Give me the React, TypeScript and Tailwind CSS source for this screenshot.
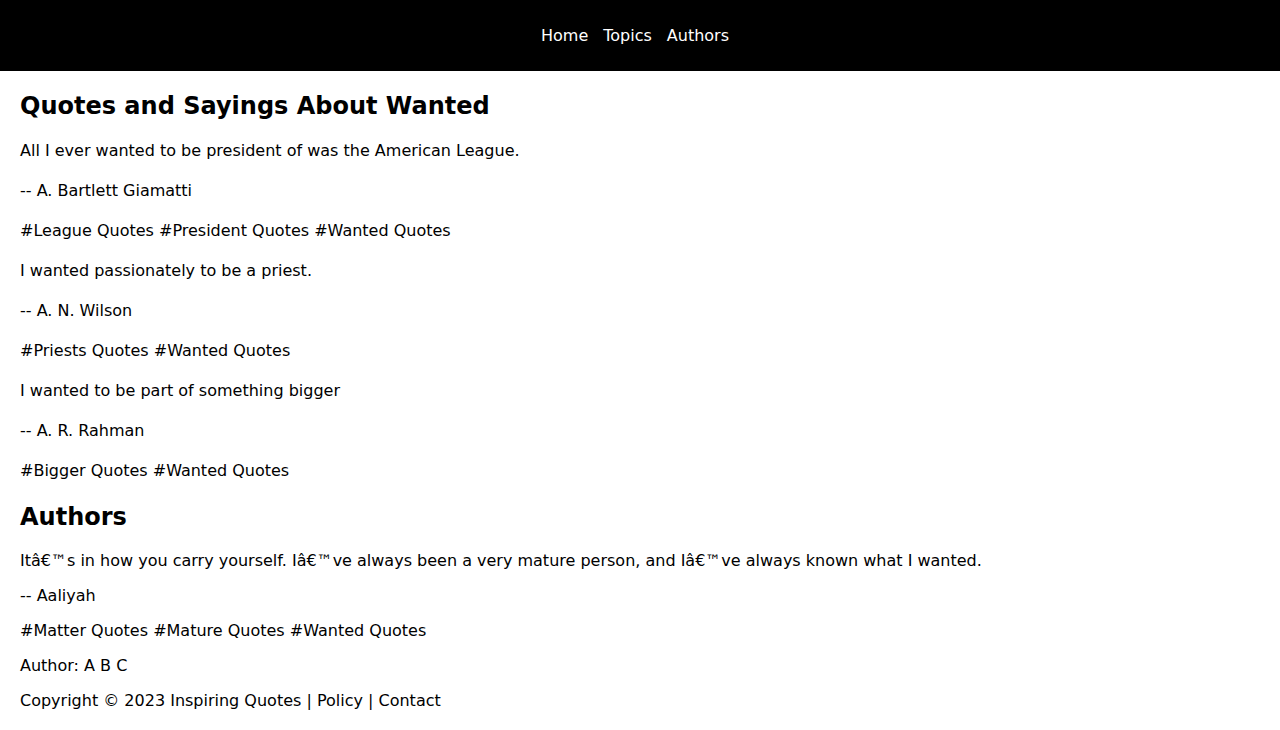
const quotes = [
  {
    text: "All I ever wanted to be president of was the American League.",
    author: "A. Bartlett Giamatti",
    tags: ["League", "President", "Wanted"],
  },
  {
    text: "I wanted passionately to be a priest.",
    author: "A. N. Wilson",
    tags: ["Priests", "Wanted"],
  },
  {
    text: "I wanted to be part of something bigger",
    author: "A. R. Rahman",
    tags: ["Bigger", "Wanted"],
  },
]

export default function App() {
  return (
    <div className="min-h-screen bg-white text-black font-['DejaVu_Sans',sans-serif]">
      <header className="h-[71px] bg-black flex items-center justify-center">
        <nav className="flex gap-[15px] mr-[10px] text-white text-base">
          <a href="#">Home</a>
          <a href="#">Topics</a>
          <a href="#">Authors</a>
        </nav>
      </header>

      <main className="px-5 pt-[21px]">
        <h1 className="text-2xl font-bold leading-7">Quotes and Sayings About Wanted</h1>
        <div className="mt-[19px] flex flex-col gap-4 text-base leading-6">
          {quotes.map((q) => (
            <div key={q.author} className="flex flex-col gap-4">
              <p>{q.text}</p>
              <p>-- {q.author}</p>
              <p>
                {q.tags.map((t, i) => (
                  <span key={t}>
                    {i > 0 ? " " : ""}
                    <a href="#">#{t} Quotes</a>
                  </span>
                ))}
              </p>
            </div>
          ))}
        </div>

        <h2 className="mt-5 text-2xl font-bold leading-7">Authors</h2>
        <div className="mt-5 flex flex-col gap-[15px] text-base leading-5">
          <p>Itâ€™s in how you carry yourself. Iâ€™ve always been a very mature person, and Iâ€™ve always known what I wanted.</p>
          <p>-- Aaliyah</p>
          <p>
            <a href="#">#Matter Quotes</a> <a href="#">#Mature Quotes</a> <a href="#">#Wanted Quotes</a>
          </p>
          <p>Author: A B C</p>
          <footer>
            Copyright © 2023 Inspiring Quotes | <a href="#">Policy</a> | <a href="#">Contact</a>
          </footer>
        </div>
      </main>
    </div>
  )
}
